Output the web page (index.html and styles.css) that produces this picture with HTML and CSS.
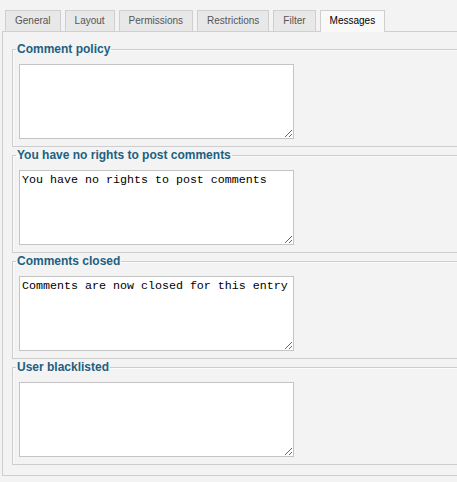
FILE: index.html
```html
<!DOCTYPE html>
<html lang="en">
<head>
    <meta charset="UTF-8">
    <title>Messages</title>
    <link rel="stylesheet" href="styles.css">
</head>
<body>
    <ul class="tabs">
        <li class="tab">General</li>
        <li class="tab">Layout</li>
        <li class="tab">Permissions</li>
        <li class="tab">Restrictions</li>
        <li class="tab">Filter</li>
        <li class="tab active">Messages</li>
    </ul>

    <div class="panel">
        <fieldset class="group">
            <legend>Comment policy</legend>
            <textarea class="message"></textarea>
        </fieldset>
        <fieldset class="group">
            <legend>You have no rights to post comments</legend>
            <textarea class="message">You have no rights to post comments</textarea>
        </fieldset>
        <fieldset class="group">
            <legend>Comments closed</legend>
            <textarea class="message">Comments are now closed for this entry</textarea>
        </fieldset>
        <fieldset class="group">
            <legend>User blacklisted</legend>
            <textarea class="message"></textarea>
        </fieldset>
    </div>
</body>
</html>
```

FILE: styles.css
```css
html,
body {
    margin: 0;
    padding: 0;
    overflow: hidden;
}

body {
    font: 11px 'Liberation Sans', Arial, sans-serif;
    background: #f3f3f3;
    color: #111;
}

/* Tab strip */
.tabs {
    display: flex;
    gap: 4px;
    list-style: none;
    margin: 10px 0 0;
    padding: 0 0 0 5px;
}

.tab {
    height: 20px;
    line-height: 20px;
    padding: 0 9px;
    border: 1px solid #cfcfcf;
    border-bottom: 0;
    background: #e8e8e8;
    color: #555;
    font-size: 10px;
}

.tab.active {
    position: relative;
    height: 21px;
    margin-bottom: -1px;
    background: #f9f9f9;
    color: #000;
}

/* Panel */
.panel {
    margin-left: 2px;
    padding: 10px 0 10px 9px;
    border: 1px solid #cfcfcf;
    border-right: 0;
}

.group {
    margin: 0 0 1px;
    padding: 8px 0 7px 6px;
    border: 1px solid #cdcdcd;
    border-right: 0;
    box-shadow: inset 1px 1px 0 #fbfbfb;
}

.group:last-child {
    margin-bottom: 0;
}

.group legend {
    padding: 0 1px;
    margin-left: -3px;
    line-height: 14px;
    color: #21607f;
    font: bold 12px 'Liberation Sans', Arial, sans-serif;
}

.message {
    display: block;
    box-sizing: border-box;
    width: 275px;
    height: 75px;
    margin: 0;
    padding: 2px 2px;
    border: 1px solid #c4c4c4;
    background: #fff;
    font: 11.67px 'Liberation Mono', 'Courier New', monospace;
    color: #000;
}
```
